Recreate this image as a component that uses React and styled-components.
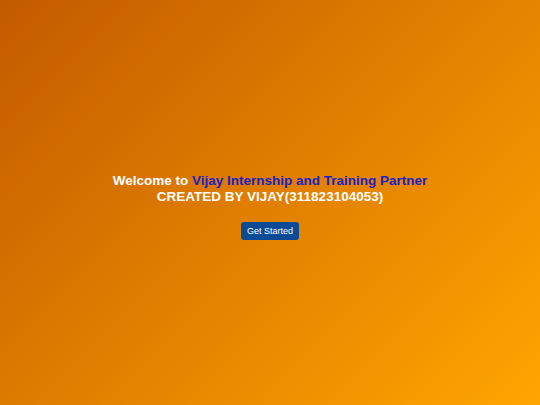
import React from 'react'
import styled, { createGlobalStyle } from 'styled-components'

const GlobalStyle = createGlobalStyle`
  html, body {
    margin: 0;
    padding: 0;
  }
  body {
    font-family: "Liberation Sans", Arial, sans-serif;
  }
`

const Root = styled.div`
  display: flex;
  flex-direction: column;
  align-items: center;
  justify-content: center;
  box-sizing: border-box;
  width: 100%;
  height: 100vh;
  padding-top: 8px;
  background: linear-gradient(135deg, #c25a00 0%, #ffa500 100%);
`

const Heading = styled.h1`
  margin: 0;
  font-size: 13.5px;
  font-weight: bold;
  line-height: 16px;
  color: #ffffff;
  text-align: center;
`

const Highlight = styled.span`
  color: #2020c8;
`

const StartButton = styled.button`
  margin-top: 17px;
  height: 18px;
  padding: 0 6px;
  border: none;
  border-radius: 3px;
  background: #0b4a94;
  color: #ffffff;
  font-family: "Liberation Sans", Arial, sans-serif;
  font-size: 9px;
  cursor: pointer;
`

const App = () => {
  return (
    <Root>
      <GlobalStyle />
      <Heading>
        Welcome to <Highlight>Vijay Internship and Training Partner</Highlight>
        <br />
        CREATED BY VIJAY(311823104053)
      </Heading>
      <StartButton>Get Started</StartButton>
    </Root>
  )
}

export default App
